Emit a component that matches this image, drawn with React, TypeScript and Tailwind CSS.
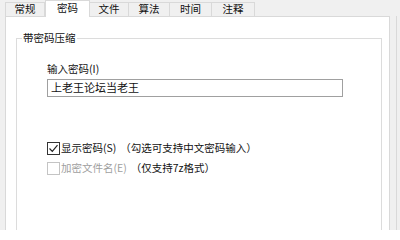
const FONT = "font-['Microsoft_YaHei','Noto_Sans_CJK_SC',sans-serif]";

const TABS = ["常规", "密码", "文件", "算法", "时间", "注释"];
const TAB_WIDTHS = ["w-[40px]", "w-[45px]", "w-[39px]", "w-[41px]", "w-[42px]", "w-[43px]"];

function Checkbox({ checked, disabled }: { checked?: boolean; disabled?: boolean }) {
  return (
    <span
      className={`flex h-[13px] w-[13px] shrink-0 items-center justify-center border bg-white ${
        disabled ? "border-[#c4c4c4]" : "border-[#333333]"
      }`}
    >
      {checked && (
        <svg width="11" height="11" viewBox="0 0 11 11">
          <path d="M1.5 5.5 L4.3 8.3 L9.5 2.2" fill="none" stroke="#222" strokeWidth="1.2" />
        </svg>
      )}
    </span>
  );
}

export default function App() {
  return (
    <div className={`relative h-[230px] w-[400px] overflow-hidden bg-[#f0f0f0] text-[10.5px] leading-none text-[#111] ${FONT}`}>
      <div className="flex h-[16px] items-end pl-[5px]">
        {TABS.map((tab, i) =>
          i === 1 ? (
            <div
              key={tab}
              className={`relative z-10 -mb-px flex h-[17px] ${TAB_WIDTHS[i]} items-start justify-center border border-b-0 border-[#d9d9d9] bg-white pt-[2px]`}
            >
              {tab}
            </div>
          ) : (
            <div
              key={tab}
              className={`flex h-[14px] ${TAB_WIDTHS[i]} items-center justify-center border border-b-0 border-l-0 border-[#d9d9d9] bg-[#f0f0f0] first:border-l`}
            >
              {tab}
            </div>
          )
        )}
      </div>
      <div className="ml-[5px] h-[220px] w-[385px] border border-[#d9d9d9] bg-white pl-[10px] pr-[7px] pt-[21px]">
        <div className="relative h-[200px] border border-[#dcdcdc] pl-[30px] pt-[25px]">
          <span className="absolute -top-[6px] left-[5px] bg-white px-[1px]">带密码压缩</span>
          <div className="mb-[4px]">输入密码(I)</div>
          <div className="flex h-[18px] w-[296px] items-center border border-[#a0a0a0] px-[3px] text-[11px]">
            上老王论坛当老王
          </div>
          <div className="mt-[45px] flex items-center">
            <Checkbox checked />
            <span className="ml-[1px]">显示密码(S)</span>
            <span className="ml-[4px]">（勾选可支持中文密码输入）</span>
          </div>
          <div className="mt-[7px] flex items-center">
            <Checkbox disabled />
            <span className="ml-[1px] text-[#a0a0a0]">加密文件名(E)</span>
            <span className="ml-[4px]">（仅支持7z格式）</span>
          </div>
        </div>
      </div>
      <div className="absolute right-[3px] top-[16px] h-[214px] w-px bg-[#d9d9d9]" />
    </div>
  );
}
